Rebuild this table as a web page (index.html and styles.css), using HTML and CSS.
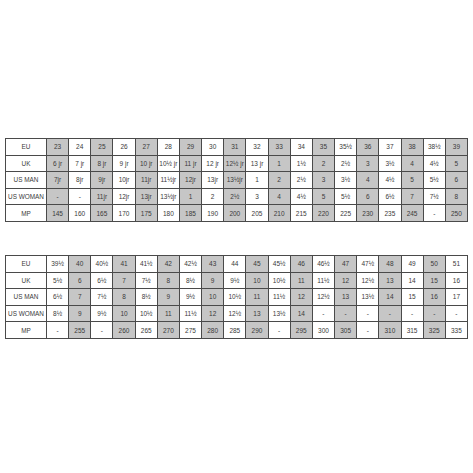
FILE: index.html
```html
<!DOCTYPE html>
<html>
<head>
<meta charset="utf-8">
<link rel="stylesheet" href="styles.css">
</head>
<body>
<div class="page">
<table class="sizes">
<colgroup><col class="lab"><col span="19" class="c"></colgroup>
<tr><th>EU</th><td class="g">23</td><td>24</td><td class="g">25</td><td>26</td><td class="g">27</td><td>28</td><td class="g">29</td><td>30</td><td class="g">31</td><td>32</td><td class="g">33</td><td>34</td><td class="g">35</td><td>35½</td><td class="g">36</td><td>37</td><td class="g">38</td><td>38½</td><td class="g">39</td></tr>
<tr><th>UK</th><td class="g">6 jr</td><td>7 jr</td><td class="g">8 jr</td><td>9 jr</td><td class="g">10 jr</td><td>10½ jr</td><td class="g">11 jr</td><td>12 jr</td><td class="g">12½ jr</td><td>13 jr</td><td class="g">1</td><td>1½</td><td class="g">2</td><td>2½</td><td class="g">3</td><td>3½</td><td class="g">4</td><td>4½</td><td class="g">5</td></tr>
<tr><th>US MAN</th><td class="g">7jr</td><td>8jr</td><td class="g">9jr</td><td>10jr</td><td class="g">11jr</td><td>11½jr</td><td class="g">12jr</td><td>13jr</td><td class="g">13½jr</td><td>1</td><td class="g">2</td><td>2½</td><td class="g">3</td><td>3½</td><td class="g">4</td><td>4½</td><td class="g">5</td><td>5½</td><td class="g">6</td></tr>
<tr><th>US WOMAN</th><td class="g">-</td><td>-</td><td class="g">11jr</td><td>12jr</td><td class="g">13jr</td><td>13½jr</td><td class="g">1</td><td>2</td><td class="g">2½</td><td>3</td><td class="g">4</td><td>4½</td><td class="g">5</td><td>5½</td><td class="g">6</td><td>6½</td><td class="g">7</td><td>7½</td><td class="g">8</td></tr>
<tr><th>MP</th><td class="g">145</td><td>160</td><td class="g">165</td><td>170</td><td class="g">175</td><td>180</td><td class="g">185</td><td>190</td><td class="g">200</td><td>205</td><td class="g">210</td><td>215</td><td class="g">220</td><td>225</td><td class="g">230</td><td>235</td><td class="g">245</td><td>-</td><td class="g">250</td></tr>
</table>

<table class="sizes">
<colgroup><col class="lab"><col span="19" class="c"></colgroup>
<tr><th>EU</th><td>39½</td><td class="g">40</td><td>40½</td><td class="g">41</td><td>41½</td><td class="g">42</td><td>42½</td><td class="g">43</td><td>44</td><td class="g">45</td><td>45½</td><td class="g">46</td><td>46½</td><td class="g">47</td><td>47½</td><td class="g">48</td><td>49</td><td class="g">50</td><td>51</td></tr>
<tr><th>UK</th><td>5½</td><td class="g">6</td><td>6½</td><td class="g">7</td><td>7½</td><td class="g">8</td><td>8½</td><td class="g">9</td><td>9½</td><td class="g">10</td><td>10½</td><td class="g">11</td><td>11½</td><td class="g">12</td><td>12½</td><td class="g">13</td><td>14</td><td class="g">15</td><td>16</td></tr>
<tr><th>US MAN</th><td>6½</td><td class="g">7</td><td>7½</td><td class="g">8</td><td>8½</td><td class="g">9</td><td>9½</td><td class="g">10</td><td>10½</td><td class="g">11</td><td>11½</td><td class="g">12</td><td>12½</td><td class="g">13</td><td>13½</td><td class="g">14</td><td>15</td><td class="g">16</td><td>17</td></tr>
<tr><th>US WOMAN</th><td>8½</td><td class="g">9</td><td>9½</td><td class="g">10</td><td>10½</td><td class="g">11</td><td>11½</td><td class="g">12</td><td>12½</td><td class="g">13</td><td>13½</td><td class="g">14</td><td>-</td><td class="g">-</td><td>-</td><td class="g">-</td><td>-</td><td class="g">-</td><td>-</td></tr>
<tr><th>MP</th><td>-</td><td class="g">255</td><td>-</td><td class="g">260</td><td>265</td><td class="g">270</td><td>275</td><td class="g">280</td><td>285</td><td class="g">290</td><td>-</td><td class="g">295</td><td>300</td><td class="g">305</td><td>-</td><td class="g">310</td><td>315</td><td class="g">325</td><td>335</td></tr>
</table>
</div>
</body>
</html>
```

FILE: styles.css
```css
html, body {
  margin: 0;
  padding: 0;
  background: #ffffff;
}
.page {
  padding: 138px 0 0 5px;
  display: flex;
  flex-direction: column;
  gap: 33px;
}
.sizes {
  border-collapse: collapse;
  table-layout: fixed;
  width: 463px;
  font-family: "Liberation Sans", Arial, sans-serif;
  font-size: 6.5px;
  color: #3a3a3a;
}
.sizes col.lab {
  width: 41px;
}
.sizes th,
.sizes td {
  border: 1px solid #4a4a4a;
  height: 15.6px;
  padding: 0;
  text-align: center;
  vertical-align: middle;
  font-weight: normal;
  white-space: nowrap;
  overflow: hidden;
  background: #ffffff;
}
.sizes th {
  font-size: 6.4px;
}
.sizes td.g {
  background: #c6c6c6;
}
```
